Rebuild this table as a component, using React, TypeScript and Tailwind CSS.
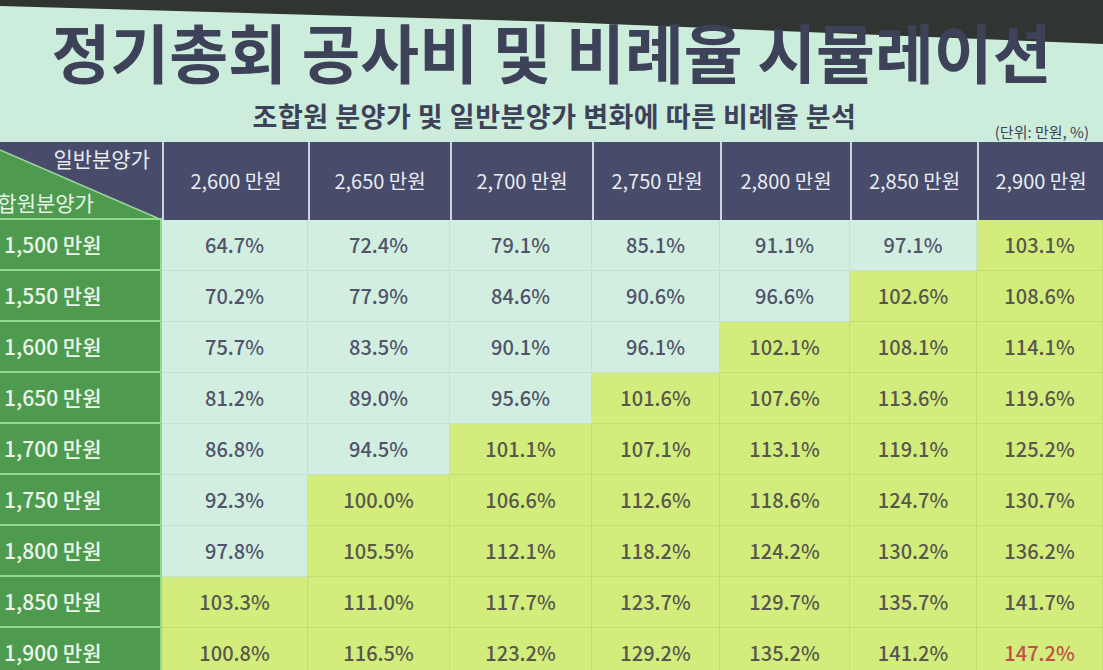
const COLS = ["2,600", "2,650", "2,700", "2,750", "2,800", "2,850", "2,900"];

const ROWS: { label: string; values: number[] }[] = [
  { label: "1,500", values: [64.7, 72.4, 79.1, 85.1, 91.1, 97.1, 103.1] },
  { label: "1,550", values: [70.2, 77.9, 84.6, 90.6, 96.6, 102.6, 108.6] },
  { label: "1,600", values: [75.7, 83.5, 90.1, 96.1, 102.1, 108.1, 114.1] },
  { label: "1,650", values: [81.2, 89.0, 95.6, 101.6, 107.6, 113.6, 119.6] },
  { label: "1,700", values: [86.8, 94.5, 101.1, 107.1, 113.1, 119.1, 125.2] },
  { label: "1,750", values: [92.3, 100.0, 106.6, 112.6, 118.6, 124.7, 130.7] },
  { label: "1,800", values: [97.8, 105.5, 112.1, 118.2, 124.2, 130.2, 136.2] },
  { label: "1,850", values: [103.3, 111.0, 117.7, 123.7, 129.7, 135.7, 141.7] },
  { label: "1,900", values: [100.8, 116.5, 123.2, 129.2, 135.2, 141.2, 147.2] },
];

function ValueCell({ value, last }: { value: number; last: boolean }) {
  const over = value >= 100;
  const highlight = last && value > 145;
  return (
    <div
      className={`flex h-[51px] items-center justify-center border-b border-r text-[20px] font-medium ${
        over
          ? "border-[#c4dc72] bg-[#d3ed7c] text-[#58574e]"
          : "border-[#c3e1cf] bg-[#d2eee0] text-[#50536a]"
      } ${highlight ? "font-bold text-[#c0504a]" : ""}`}
    >
      {value.toFixed(1)}%
    </div>
  );
}

export default function App() {
  return (
    <div
      className="relative h-[670px] w-[1103px] overflow-hidden bg-[#cdeddc]"
      style={{ fontFamily: '"Noto Sans CJK KR", "Noto Sans", sans-serif' }}
    >
      {/* dark band above the projected slide */}
      <svg className="absolute left-0 top-0" width="1103" height="46" viewBox="0 0 1103 46">
        <polygon points="0,0 1103,0 1103,44 560,22 0,6" fill="#303532" />
      </svg>

      <h1 className="relative mt-[12px] text-center text-[64px] font-bold leading-[76px] text-[#3e4259]">
        정기총회 공사비 및 비례율 시뮬레이션
      </h1>
      <h2 className="mt-[10px] pl-[6px] text-center text-[27px] font-bold leading-[36px] tracking-[0.5px] text-[#3e4259]">
        조합원 분양가 및 일반분양가 변화에 따른 비례율 분석
      </h2>
      <div className="-mt-[12px] pr-[14px] text-right text-[15px] leading-[20px] text-[#3e4259]">
        (단위: 만원, %)
      </div>

      <div className="grid grid-cols-[162px_146px_142px_142px_128px_130px_127px_1fr]">
        {/* corner cell split by the diagonal */}
        <div className="relative h-[78px] overflow-hidden border-b-2 border-[#8fdc8a] bg-[#484b6a]">
          <svg className="absolute inset-0" width="162" height="78" viewBox="0 0 162 78">
            <polygon points="0,8 162,78 0,78" fill="#4e9b4f" />
            <line x1="0" y1="8" x2="162" y2="78" stroke="#9fd9a0" strokeWidth="1.5" />
          </svg>
          <div className="relative flex h-full flex-col justify-between py-[2px]">
            <span className="pr-[12px] text-right text-[21px] leading-[28px] text-[#e6ecf0]">일반분양가</span>
            <span className="-ml-[22px] text-[21px] leading-[28px] text-[#e8f4e6]">조합원분양가</span>
          </div>
        </div>
        {COLS.map((c) => (
          <div
            key={c}
            className="flex h-[78px] items-center justify-center border-l-2 border-[#c6d9e2] bg-[#484b6a] text-[20px] text-[#e8edf2]"
          >
            {c} 만원
          </div>
        ))}

        {ROWS.map((row) => (
          <div key={row.label} className="contents">
            <div className="flex h-[51px] items-center border-b-2 border-r-2 border-[#8fdc8a] bg-[#4e9b4f] pl-[4px] text-[21px] font-medium text-[#edf6ea]">
              {row.label} 만원
            </div>
            {row.values.map((v, i) => (
              <ValueCell key={i} value={v} last={i === row.values.length - 1} />
            ))}
          </div>
        ))}
      </div>
    </div>
  );
}
